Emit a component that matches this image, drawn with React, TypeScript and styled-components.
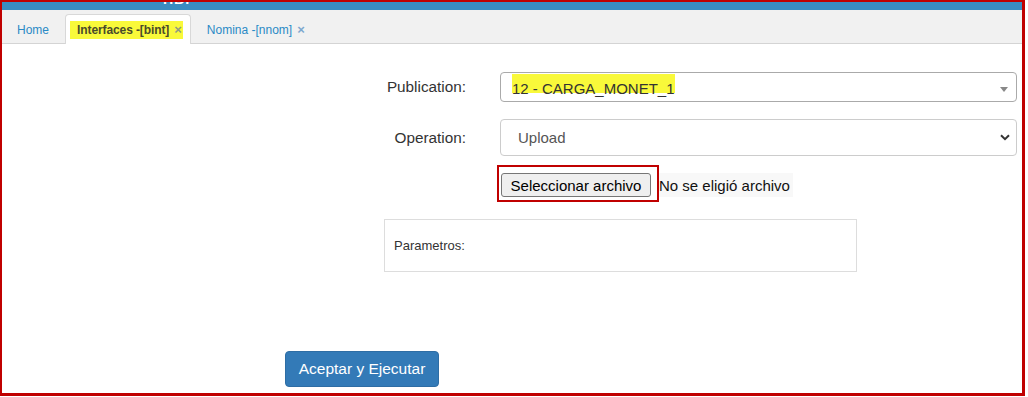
import React from "react";
import styled, { createGlobalStyle, css } from "styled-components";

const Global = createGlobalStyle`
  html, body { margin: 0; padding: 0; background: #fff; }
  body { font-family: "Liberation Sans", Arial, sans-serif; }
  * { box-sizing: border-box; }
`;

const Frame = styled.div`
  width: 1025px;
  height: 396px;
  border-style: solid;
  border-color: #c00000;
  border-width: 2px 3px 3px 2px;
  display: flex;
  flex-direction: column;
  overflow: hidden;
`;

const TopBar = styled.div`
  height: 8px;
  background: #3a8cc1;
  overflow: hidden;
  padding-left: 161px;
  flex: none;
`;

const TopBarText = styled.span`
  display: block;
  color: #fff;
  font-weight: bold;
  font-size: 14px;
  line-height: 14px;
  margin-top: -10px;
  letter-spacing: 1px;
`;

const TabBar = styled.div`
  height: 34px;
  flex: none;
  background: #f1f1f1;
  border-bottom: 1px solid #d4d4d4;
  padding-top: 4px;
  display: flex;
  align-items: flex-end;
`;

const Tabs = styled.div`
  display: flex;
  gap: 1px;
  margin-bottom: -1px;
`;

const Tab = styled.div<{ $active?: boolean }>`
  height: 30px;
  padding: 0 14px;
  display: flex;
  align-items: center;
  gap: 5px;
  font-size: 12px;
  color: #2a8ac6;
  border: 1px solid transparent;
  border-bottom: none;
  border-radius: 4px 4px 0 0;
  white-space: nowrap;
  ${(p) =>
    p.$active &&
    css`
      padding: 0 15px 0 14px;
      background: #fff;
      border-color: #d8d8d8;
      color: #4a4a2a;
      font-weight: bold;
      letter-spacing: -0.1px;
    `}
`;

const Highlight = styled.span`
  display: inline-flex;
  align-items: center;
  gap: 5px;
  height: 18px;
  padding: 0 1px 0 7px;
  margin: 0 -8px 0 -10px;
  background: #f9f93a;
`;

const Close = styled.span<{ $muted?: boolean }>`
  font-size: 13px;
  font-weight: bold;
  letter-spacing: 0;
  color: ${(p) => (p.$muted ? "#8f9a82" : "#7ea8cf")};
`;

const Content = styled.div`
  flex: 1;
  padding: 28px 5px 0 0;
  display: flex;
  flex-direction: column;
`;

const FormRow = styled.div<{ $mb: number }>`
  display: grid;
  grid-template-columns: 464px 517px;
  column-gap: 34px;
  align-items: center;
  margin-bottom: ${(p) => p.$mb}px;
`;

const Label = styled.label`
  text-align: right;
  font-size: 15.3px;
  color: #333;
`;

const Select2Box = styled.div`
  height: 30px;
  border: 1px solid #aaa;
  border-radius: 4px;
  padding: 1px 8px 0 11px;
  display: flex;
  align-items: flex-start;
  justify-content: space-between;
`;

const Marked = styled.span`
  display: inline-block;
  height: 19px;
  padding-top: 7px;
  line-height: 15px;
  font-size: 15px;
  color: #333;
  background: #f9f93a;
  white-space: nowrap;
`;

const Caret = styled.span`
  width: 0;
  height: 0;
  align-self: center;
  margin-top: 3px;
  border-style: solid;
  border-width: 5px 4px 0 4px;
  border-color: #888 transparent transparent transparent;
`;

const SelectBox = styled.div`
  height: 37px;
  border: 1px solid #ccc;
  border-radius: 4px;
  padding: 0 6px 0 17px;
  display: flex;
  align-items: center;
  justify-content: space-between;
  font-size: 15px;
  color: #555;
`;

const FileRow = styled.div`
  display: flex;
  align-items: flex-start;
  margin-left: -3px;
  height: 37px;
`;

const Annotated = styled.div`
  border: 2px solid #c00000;
  padding: 6px 6px 3px 2px;
  display: flex;
`;

const FileButton = styled.button`
  width: 150px;
  height: 24px;
  padding: 0 6px;
  font-family: "Liberation Sans", Arial, sans-serif;
  font-size: 15px;
  color: #000;
  background: #efefef;
  border: 1px solid #767676;
  border-radius: 3px;
  white-space: nowrap;
`;

const FileName = styled.span`
  margin-top: 8px;
  height: 24px;
  padding-right: 3px;
  display: flex;
  align-items: center;
  font-size: 15px;
  color: #111;
  background: #f8f8f8;
  white-space: nowrap;
`;

const ParamsBox = styled.div`
  margin: 17px 0 0 382px;
  width: 473px;
  height: 53px;
  border: 1px solid #ddd;
  padding-left: 9px;
  display: flex;
  align-items: center;
  font-size: 13px;
  color: #333;
`;

const PrimaryButton = styled.button`
  margin: 79px 0 0 283px;
  width: 154px;
  height: 36px;
  background: #337ab7;
  border: 1px solid #2e6da4;
  border-radius: 4px;
  color: #fff;
  font-family: "Liberation Sans", Arial, sans-serif;
  font-size: 15.5px;
  padding: 0;
`;

export default function App() {
  return (
    <>
      <Global />
      <Frame>
        <TopBar>
          <TopBarText>HBI</TopBarText>
        </TopBar>
        <TabBar>
          <Tabs>
            <Tab>Home</Tab>
            <Tab $active>
              <Highlight>
                Interfaces -[bint]
                <Close $muted>×</Close>
              </Highlight>
            </Tab>
            <Tab>
              Nomina -[nnom]
              <Close>×</Close>
            </Tab>
          </Tabs>
        </TabBar>
        <Content>
          <FormRow $mb={17}>
            <Label>Publication:</Label>
            <Select2Box>
              <Marked>12 - CARGA_MONET_1</Marked>
              <Caret />
            </Select2Box>
          </FormRow>
          <FormRow $mb={9}>
            <Label>Operation:</Label>
            <SelectBox>
              <span>Upload</span>
              <svg width="10" height="7" viewBox="0 0 10 7">
                <path d="M1 1.2 L5 5.2 L9 1.2" fill="none" stroke="#333" strokeWidth="2" />
              </svg>
            </SelectBox>
          </FormRow>
          <FormRow $mb={0}>
            <span />
            <FileRow>
              <Annotated>
                <FileButton>Seleccionar archivo</FileButton>
              </Annotated>
              <FileName>No se eligió archivo</FileName>
            </FileRow>
          </FormRow>
          <ParamsBox>Parametros:</ParamsBox>
          <div>
            <PrimaryButton>Aceptar y Ejecutar</PrimaryButton>
          </div>
        </Content>
      </Frame>
    </>
  );
}
